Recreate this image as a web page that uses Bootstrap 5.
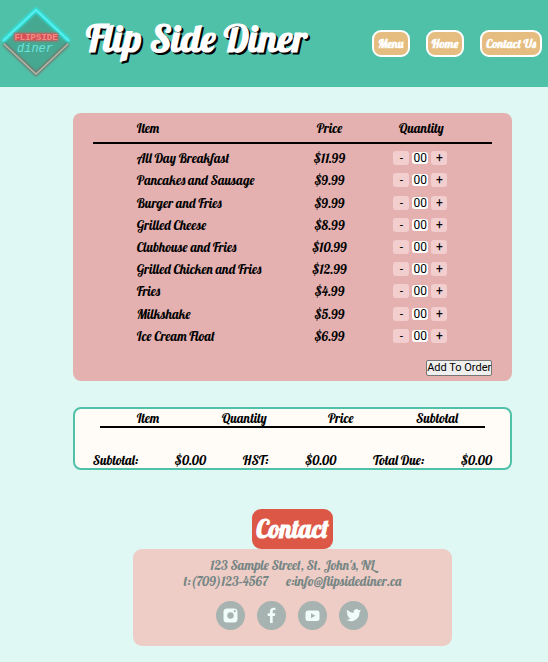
<!DOCTYPE html>
<html lang="en">
<head>
<meta charset="utf-8">
<meta name="viewport" content="width=device-width, initial-scale=1">
<title>Flip Side Diner</title>
<link href="https://cdn.jsdelivr.net/npm/bootstrap@5.3.0/dist/css/bootstrap.min.css" rel="stylesheet">
<style>
  body { background: #dff8f4; color: #000; font: 13px/16px Lobster, "Liberation Serif", serif; }
  th { font-weight: normal; }
  .site-header { background: #50c1a9; min-height: 87px; padding: 0 6px 0 0; }
  .site-logo { width: 72px; height: 80px; }
  .site-title { font-size: 38px; line-height: 44px; margin: 0 0 11px 14px; color: #fff; text-shadow: 2px 2px 0 #000; white-space: nowrap; }
  .nav-pill { background: #e6bd80; border: 2px solid #fff; border-radius: 9px; color: #fff; font-size: 12px; font-weight: bold; line-height: 23px; padding: 0 4px; white-space: nowrap; text-decoration: none; }
  .page-part { padding-left: 37px; }
  .panel { width: 86%; }
  .menu-panel { background: #e4b1b0; border-radius: 8px; margin-top: 26px; padding: 0 20px 5px; }
  .menu-table { height: 234px; }
  .menu-table thead th { height: 30px; border-bottom: 2px solid #000; }
  .menu-table thead tr:last-child { height: 4px; }
  .col-item { width: 50%; padding-left: 44px; }
  .col-price { width: 18%; padding-left: 3px; }
  .col-qty { width: 32%; }
  .qty-cell { padding-right: 15px; }
  .qty-group { gap: 3px; font: 12px/14px Roboto, "Liberation Sans", sans-serif; padding-right: 2px; }
  .qty-btn { width: 16px; height: 14px; border: 0; border-radius: 3px; background: #f2cecf; color: #000; padding: 0; }
  .qty-input { width: 16px; height: 12px; border: 0; border-radius: 3px; background: #fff; color: #000; padding: 0; text-align: center; }
  .add-btn { font: 11px/14px Roboto, "Liberation Sans", sans-serif; background: #efefef; color: #000; border: 1px solid #767676; border-radius: 2px; padding: 0; margin-top: 13px; }
  .order-panel { background: #fffcf7; border: 2px solid #50c1a9; border-radius: 8px; margin-top: 26px; padding: 0 18px; }
  .order-table { width: calc(100% - 14px); table-layout: fixed; }
  .order-table th { height: 18px; padding: 0; border-bottom: 2px solid #000; }
  .totals { margin-top: 24px; }
  .contact-title { background: #dc5746; color: #fff; border-radius: 9px; font-size: 25px; line-height: 40px; margin: 39px 0 0; padding: 0 4px; }
  .contact-panel { width: 62.4%; background: #edcdc6; color: #758583; border-radius: 9px; padding: 8px 8px 16px; }
  .mail-gap { gap: 18px; }
  .socials { gap: 12px; margin-top: 12px; }
  .socials svg { width: 29px; height: 29px; display: block; }
  a { color: inherit; text-decoration: none; }
</style>
</head>
<body>
<header class="site-header d-flex align-items-center">
  <svg class="site-logo flex-shrink-0" viewBox="0 0 72 80" role="img" aria-label="Flipside Diner">
    <defs><filter id="glow" x="-20%" y="-20%" width="140%" height="140%"><feGaussianBlur stdDeviation="1.3"/></filter></defs>
    <path d="M36 6 68 38 36 70 4 38Z" fill="#47a891"/>
    <path d="M3 37 36 6 69 37" fill="none" stroke="#27eff0" stroke-width="4" filter="url(#glow)"/>
    <path d="M3 37 36 6 69 37" fill="none" stroke="#65f0ee" stroke-width="1.5"/>
    <path d="M4 40 36 70 68 40" fill="none" stroke="#6d796e" stroke-width="4" filter="url(#glow)"/>
    <path d="M4 40 36 70 68 40" fill="none" stroke="#bdb9aa" stroke-width="1.3"/>
    <path d="M14 29H58V37H14Z" fill="#d94f55" filter="url(#glow)"/>
    <text x="36" y="36" text-anchor="middle" font-family="Liberation Mono" font-size="9" font-weight="bold" fill="#f08d86">FLIPSIDE</text>
    <text x="35" y="48" text-anchor="middle" font-family="Liberation Mono" font-size="12" font-style="italic" fill="#69e4df">diner</text>
  </svg>
  <h1 class="site-title fw-bold">Flip Side Diner</h1>
  <nav class="d-flex gap-3 ms-auto" aria-label="Main">
    <a class="nav-pill" href="#menu">Menu</a>
    <a class="nav-pill" href="#home">Home</a>
    <a class="nav-pill" href="#contact">Contact Us</a>
  </nav>
</header>

<main class="page-part">
  <form class="panel menu-panel mx-auto" id="menu">
    <table class="menu-table w-100">
      <thead>
        <tr><th class="col-item">Item</th><th class="col-price text-center">Price</th><th class="col-qty qty-cell text-center">Quantity</th></tr>
        <tr aria-hidden="true"><td colspan="3"></td></tr>
      </thead>
      <tbody id="menuRows"></tbody>
    </table>
    <div class="d-flex justify-content-end"><button type="button" class="add-btn">Add To Order</button></div>
  </form>

  <section class="panel order-panel mx-auto" aria-label="Order">
    <table class="order-table mx-auto text-center">
      <thead><tr><th>Item</th><th>Quantity</th><th>Price</th><th>Subtotal</th></tr></thead>
    </table>
    <div class="totals d-flex justify-content-between">
      <span>Subtotal:</span><span>$0.00</span><span>HST:</span><span>$0.00</span><span>Total Due:</span><span>$0.00</span>
    </div>
  </section>
</main>

<footer class="page-part d-flex flex-column align-items-center" id="contact">
  <h2 class="contact-title fw-bold">Contact</h2>
  <div class="contact-panel text-center">
    <div>123 Sample Street, St. John's, NL</div>
    <div class="mail-gap d-flex justify-content-center"><a href="tel:7091234567">t:(709)123-4567</a><a href="mailto:info@flipsidediner.ca">e:info@flipsidediner.ca</a></div>
    <div class="socials d-flex justify-content-center">
      <a href="#instagram" aria-label="Instagram"><svg viewBox="0 0 29 29"><circle cx="14.5" cy="14.5" r="14.5" fill="#a7b3b0"/><rect x="7.5" y="7.5" width="14" height="14" rx="3.5" fill="#effcf9"/><circle cx="14.5" cy="14.5" r="3.2" fill="#a7b3b0"/><circle cx="18.8" cy="10.2" r="1.1" fill="#a7b3b0"/></svg></a>
      <a href="#facebook" aria-label="Facebook"><svg viewBox="0 0 29 29"><circle cx="14.5" cy="14.5" r="14.5" fill="#a7b3b0"/><path d="M13 22v-7h-2.3v-2.700H13v-2c0-2.300 1.400-3.600 3.500-3.600.9 0 1.600.1 1.900.1v2.300h-1.400c-1.100 0-1.300.6-1.300 1.400v1.800h2.600l-.4 2.700h-2.200v7Z" fill="#effcf9"/></svg></a>
      <a href="#youtube" aria-label="YouTube"><svg viewBox="0 0 29 29"><circle cx="14.500" cy="14.500" r="14.500" fill="#a7b3b0"/><rect x="7.500" y="9.500" width="14" height="10.500" rx="2.500" fill="#effcf9"/><path d="m13 12.300 4.300 2.500-4.300 2.500Z" fill="#a7b3b0"/></svg></a>
      <a href="#twitter" aria-label="Twitter"><svg viewBox="0 0 29 29"><circle cx="14.500" cy="14.500" r="14.500" fill="#a7b3b0"/><path d="M22 9.600c-.5.300-1.100.400-1.700.500.600-.400 1.100-.900 1.300-1.600-.6.300-1.200.600-1.900.700a3 3 0 0 0-5.200 2.700c-2.500-.1-4.700-1.300-6.200-3.100a3 3 0 0 0 .9 4c-.5 0-1-.1-1.300-.4 0 1.500 1 2.700 2.400 3-.4.100-.9.100-1.300 0 .4 1.200 1.500 2.100 2.800 2.100A6 6 0 0 1 7.400 18.800a8.500 8.500 0 0 0 13.100-7.600c.6-.4 1.100-1 1.500-1.600Z" fill="#effcf9"/></svg></a>
    </div>
  </div>
</footer>

<script src="https://cdn.jsdelivr.net/npm/bootstrap@5.3.0/dist/js/bootstrap.bundle.min.js"></script>
<script>
  const items = [
    ["All Day Breakfast", "11.99"], ["Pancakes and Sausage", "9.99"], ["Burger and Fries", "9.99"],
    ["Grilled Cheese", "8.99"], ["Clubhouse and Fries", "10.99"], ["Grilled Chicken and Fries", "12.99"],
    ["Fries", "4.99"], ["Milkshake", "5.99"], ["Ice Cream Float", "6.99"]
  ];
  document.getElementById("menuRows").innerHTML = items.map(([name, price]) => `
    <tr><td class="col-item">${name}</td><td class="col-price text-center">$${price}</td>
    <td class="qty-cell"><div class="qty-group d-flex justify-content-center align-items-center">
      <button type="button" class="qty-btn" aria-label="Less ${name}">-</button>
      <input class="qty-input" type="text" value="00" aria-label="Quantity of ${name}">
      <button type="button" class="qty-btn" aria-label="More ${name}">+</button>
    </div></td></tr>`).join("");
</script>
</body>
</html>
